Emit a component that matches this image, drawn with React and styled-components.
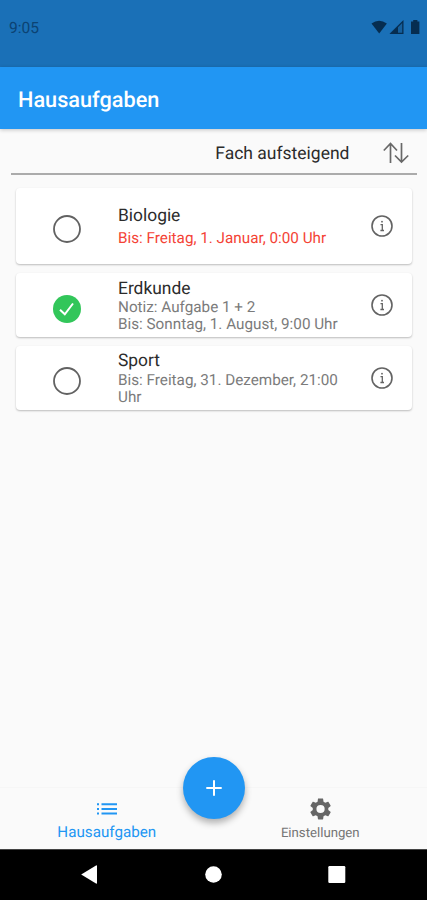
import React from "react";
import styled, { createGlobalStyle } from "styled-components";

const GlobalStyle = createGlobalStyle`
  * { box-sizing: border-box; }
  body { margin: 0; background: #fafafa; }
`;

const Screen = styled.div`
  width: 427px;
  height: 900px;
  display: flex;
  flex-direction: column;
  overflow: hidden;
  background: #fafafa;
  color: #2b2b2b;
  font-family: Roboto, "Liberation Sans", sans-serif;
  text-rendering: geometricPrecision;
  svg { display: block; flex: none; }
`;

const StatusBar = styled.div`
  flex: none;
  height: 67px;
  padding: 18px 7px 0 9px;
  display: flex;
  align-items: flex-start;
  justify-content: space-between;
  background: #1a70b7;
  color: #0c4373;
`;

const Clock = styled.span`
  font-size: 15.6px;
  line-height: 20px;
`;

const AppBar = styled.header`
  flex: none;
  height: 62px;
  padding: 5px 18px 0;
  display: flex;
  align-items: center;
  background: #2196f3;
  box-shadow: 0 1px 4px rgba(0, 0, 0, 0.22);
  z-index: 1;
`;

const Title = styled.h1`
  margin: 0;
  color: #fff;
  font-size: 21.7px;
  font-weight: 500;
  line-height: 28px;
`;

const SortRow = styled.div`
  flex: none;
  height: 46px;
  margin: 0 10px 0 11px;
  padding: 4px 8px 0 0;
  display: flex;
  align-items: center;
  justify-content: flex-end;
  gap: 33.5px;
  border-bottom: 2px solid #ababab;
`;

const SortLabel = styled.span`
  padding-top: 2px;
  font-size: 17.5px;
  line-height: 22px;
`;

const List = styled.main`
  flex: 1;
  padding: 13px 15px 0 16px;
  display: flex;
  flex-direction: column;
  gap: 9px;
`;

const Card = styled.article`
  height: ${(p) => p.$height}px;
  padding-right: 18px;
  display: grid;
  grid-template-columns: 102px 1fr 24px;
  background: #fff;
  border-radius: 4px;
  box-shadow: 0 1px 2px rgba(0, 0, 0, 0.25);
`;

const CheckCell = styled.div`
  padding: ${(p) => p.$top}px 0 0 36px;
`;

const InfoCell = styled.div`
  padding-top: ${(p) => p.$top}px;
`;

const Texts = styled.div`
  padding-top: ${(p) => p.$top}px;
`;

const Subject = styled.div`
  font-size: 17.4px;
  line-height: 20px;
  margin-bottom: ${(p) => p.$gap}px;
`;

const Detail = styled.div`
  width: 240px;
  font-size: 15.25px;
  line-height: 17.3px;
  white-space: pre-line;
  color: ${(p) => (p.$overdue ? "#f44336" : "#7b7b7b")};
`;

const BottomBar = styled.nav`
  flex: none;
  height: 62px;
  display: grid;
  grid-template-columns: 1fr 1fr;
  position: relative;
  background: #fafafa;
  border-top: 1px solid #f6f6f6;
`;

const Tab = styled.div`
  padding-top: ${(p) => (p.$active ? 9 : 8)}px;
  display: flex;
  flex-direction: column;
  align-items: center;
  color: ${(p) => (p.$active ? "#2196f3" : "#757575")};
`;

const TabLabel = styled.span`
  margin-top: ${(p) => (p.$active ? 1 : 2)}px;
  font-size: ${(p) => (p.$active ? 15.2 : 13.2)}px;
  line-height: 20px;
`;

const AddButton = styled.button`
  position: absolute;
  left: 183px;
  top: -31px;
  width: 62px;
  height: 62px;
  padding: 0;
  display: grid;
  place-items: center;
  border: 0;
  border-radius: 50%;
  background: #2196f3;
  box-shadow: 0 4px 7px rgba(0, 0, 0, 0.3);
`;

const SystemBar = styled.footer`
  flex: none;
  height: 51px;
  padding: 0 81px 0 80px;
  display: flex;
  align-items: center;
  justify-content: space-between;
  background: #000;
  border-top: 1px solid #444;
`;

const StatusIcons = () => (
  <svg width="50" height="20" viewBox="0 0 50 20" fill="#062d50">
    <path d="M1.500 5.500Q9 -.2 16.900 5.500L9.200 15.500Z" />
    <path d="M33 2.500V15.500H19.500Z" opacity=".25" />
    <path d="M28 7.500V16H19.500ZM33.500 2V16H28v-1.200h4.200V5L28 9.200V7.500Z" />
    <path d="M41 3.500h2.200V2h4.200v1.500h2v12.500H41Z" />
  </svg>
);

const SortIcon = () => (
  <svg width="26" height="22" viewBox="0 0 26 22" fill="none" stroke="#686868" strokeWidth="1.700">
    <path d="M7.500 21V2M.8 8.500 7.500 1.500l6.500 7M18.500 1v19M12 13.500l6.500 6.500 6.700-6.500" />
  </svg>
);

const CheckIcon = ({ done }) => (
  <svg width="30" height="30" viewBox="0 0 30 30" fill="none">
    {done ? (
      <>
        <circle cx="15" cy="15" r="14" fill="#32c65a" />
        <path d="m8 15.700 4.800 4.600 8.200-10.800" stroke="#fff" strokeWidth="2" />
      </>
    ) : (
      <circle cx="15" cy="15" r="13" stroke="#626262" strokeWidth="1.800" />
    )}
  </svg>
);

const InfoIcon = () => (
  <svg width="24" height="24" viewBox="0 0 24 24" fill="none" stroke="#636363">
    <circle cx="12" cy="12" r="10" strokeWidth="1.600" />
    <path d="M10.500 10.600h1.800v5.700M10.400 16.500h3.600" strokeWidth="1.300" />
    <circle cx="12" cy="7.700" r=".9" fill="#636363" stroke="none" />
  </svg>
);

const ListIcon = () => (
  <svg width="22" height="24" viewBox="0 0 22 24" fill="currentColor">
    <path d="M1 6.300h2v2H1zm0 4.700h2v2H1zm0 4.600h2v2H1zM5.500 6.300H21v2H5.500zm0 4.700H21v2H5.500zm0 4.600H21v2H5.500z" />
  </svg>
);

const GearIcon = () => (
  <svg width="26" height="26" viewBox="-.5 0 24 24" fill="#666">
    <path d="M19.140 12.940c.04-.3.06-.61.06-.94 0-.32-.02-.64-.07-.94l2.030-1.580c.18-.14.23-.41.12-.61l-1.920-3.320c-.12-.22-.37-.29-.59-.22l-2.390.96c-.5-.38-1.030-.7-1.620-.94l-.36-2.540c-.04-.24-.24-.41-.48-.41h-3.840c-.24 0-.43.17-.47.41l-.36 2.540c-.59.24-1.130.57-1.620.94l-2.390-.96c-.22-.08-.47 0-.59.22L2.740 8.870c-.12.21-.08.47.12.61l2.030 1.580c-.05.3-.09.63-.09.94s.02.64.07.94l-2.030 1.580c-.18.14-.23.41-.12.61l1.920 3.320c.12.22.37.29.59.22l2.390-.96c.5.38 1.030.7 1.620.94l.36 2.540c.05.24.24.41.48.41h3.840c.24 0 .44-.17.47-.41l.36-2.540c.59-.24 1.130-.56 1.620-.94l2.390.96c.22.08.47 0 .59-.22l1.920-3.320c.12-.22.07-.47-.12-.61l-2.010-1.580zM12 15.800a3.800 3.800 0 1 1 0-7.600 3.800 3.800 0 0 1 0 7.600z" />
  </svg>
);

const PlusIcon = () => (
  <svg width="18" height="18" viewBox="0 0 18 18" stroke="#fff" strokeWidth="2">
    <path d="M9 1.300v15.400M1.300 9h15.400" />
  </svg>
);

const BackIcon = () => (
  <svg width="18" height="20" viewBox="0 0 18 20" fill="#fff">
    <path d="M1.200 9.500 16 .5q1-.5 1 .6v16.800q0 1.100-1 .6Z" />
  </svg>
);

const HomeIcon = () => (
  <svg width="18" height="18" viewBox="0 0 18 18" fill="#fff">
    <circle cx="9.500" cy="8.500" r="8.300" />
  </svg>
);

const RecentsIcon = () => (
  <svg width="18" height="18" viewBox="0 0 18 18" fill="#fff">
    <rect x=".3" y="0" width="17" height="17" rx="1.200" />
  </svg>
);

const tasks = [
  { subject: "Biologie", detail: "Bis: Freitag, 1. Januar, 0:00 Uhr", overdue: true, height: 76, textTop: 18, gap: 4, checkTop: 26, infoTop: 26 },
  { subject: "Erdkunde", detail: "Notiz: Aufgabe 1 + 2\nBis: Sonntag, 1. August, 9:00 Uhr", done: true, height: 64, textTop: 6, gap: 0, checkTop: 21, infoTop: 20 },
  { subject: "Sport", detail: "Bis: Freitag, 31. Dezember, 21:00 Uhr", height: 64, textTop: 5, gap: 1, checkTop: 20, infoTop: 20 },
];

const Task = ({ subject, detail, overdue, done, height, textTop, gap, checkTop, infoTop }) => (
  <Card $height={height}>
    <CheckCell $top={checkTop}><CheckIcon done={done} /></CheckCell>
    <Texts $top={textTop}>
      <Subject $gap={gap}>{subject}</Subject>
      <Detail $overdue={overdue}>{detail}</Detail>
    </Texts>
    <InfoCell $top={infoTop}><InfoIcon /></InfoCell>
  </Card>
);

export default function App() {
  return (
    <Screen>
      <GlobalStyle />
      <StatusBar>
        <Clock>9:05</Clock>
        <StatusIcons />
      </StatusBar>
      <AppBar><Title>Hausaufgaben</Title></AppBar>
      <SortRow>
        <SortLabel>Fach aufsteigend</SortLabel>
        <SortIcon />
      </SortRow>
      <List>
        {tasks.map((task) => <Task key={task.subject} {...task} />)}
      </List>
      <BottomBar>
        <Tab $active><ListIcon /><TabLabel $active>Hausaufgaben</TabLabel></Tab>
        <Tab><GearIcon /><TabLabel>Einstellungen</TabLabel></Tab>
        <AddButton aria-label="+"><PlusIcon /></AddButton>
      </BottomBar>
      <SystemBar><BackIcon /><HomeIcon /><RecentsIcon /></SystemBar>
    </Screen>
  );
}
